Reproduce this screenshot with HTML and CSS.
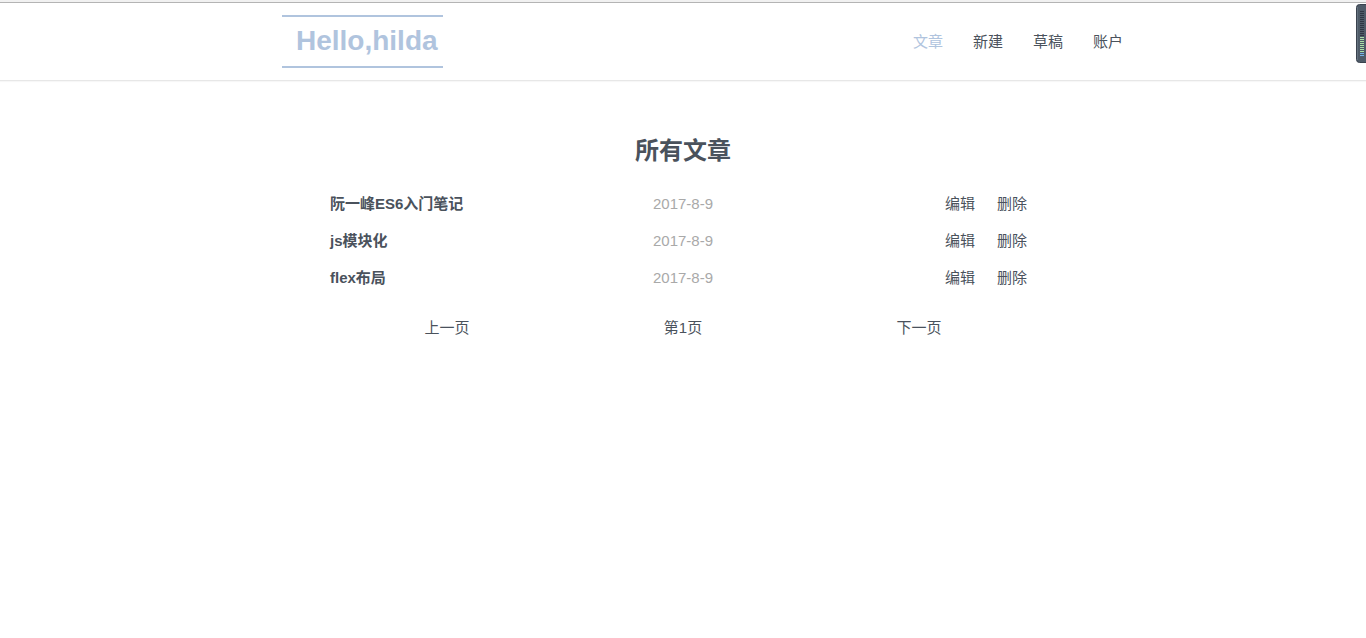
FILE: index.html
```html
<!DOCTYPE html>
<html lang="zh-CN">
<head>
<meta charset="utf-8">
<title>所有文章</title>
<link rel="stylesheet" href="styles.css">
</head>
<body>
<header class="site-header">
  <div class="header-inner">
    <a class="logo" href="#">Hello,hilda</a>
    <nav class="nav">
      <a class="nav-link active" href="#">文章</a>
      <a class="nav-link" href="#">新建</a>
      <a class="nav-link" href="#">草稿</a>
      <a class="nav-link" href="#">账户</a>
    </nav>
  </div>
</header>
<main class="content">
  <h1 class="title">所有文章</h1>
  <ul class="list">
    <li class="row">
      <a class="name" href="#">阮一峰ES6入门笔记</a>
      <span class="date">2017-8-9</span>
      <span class="actions"><a href="#">编辑</a><a href="#">删除</a></span>
    </li>
    <li class="row">
      <a class="name" href="#">js模块化</a>
      <span class="date">2017-8-9</span>
      <span class="actions"><a href="#">编辑</a><a href="#">删除</a></span>
    </li>
    <li class="row">
      <a class="name" href="#">flex布局</a>
      <span class="date">2017-8-9</span>
      <span class="actions"><a href="#">编辑</a><a href="#">删除</a></span>
    </li>
  </ul>
  <nav class="pager">
    <a href="#">上一页</a>
    <span>第1页</span>
    <a href="#">下一页</a>
  </nav>
</main>
<svg class="meter" width="10" height="59" viewBox="0 0 10 59" aria-hidden="true">
  <rect x="0.5" y="0.5" width="14" height="58" rx="3" fill="#4f5b68" stroke="#3a424e"/>
  <path d="M1.5 3V56" stroke="#64717e"/>
  <path d="M6 7V33" stroke="#2f3642" stroke-width="4" stroke-dasharray="1 1"/>
  <path d="M6 33V48" stroke="#a9dfa6" stroke-width="4" stroke-dasharray="1 1"/>
  <path d="M6 49V52" stroke="#76b2e6" stroke-width="4" stroke-dasharray="1 1"/>
</svg>
</body>
</html>
```
FILE: styles.css
```css
* {
  box-sizing: border-box;
}

body {
  margin: 0;
  background: #fff;
  color: #4a525c;
  font: 15px/21px "Liberation Sans", Arial, "Noto Sans CJK SC", sans-serif;
}

a {
  color: inherit;
  text-decoration: none;
}

.site-header {
  border-top: 2px solid #f1f1f1;
  border-bottom: 1px solid #e7e7e7;
  box-shadow: 0 1px 1px #f7f7f7;
}

.header-inner {
  display: flex;
  align-items: center;
  justify-content: space-between;
  padding: 12px calc(50% - 455px) 12px calc(50% - 401px);
  border-top: 1px solid #b4b4b4;
}

.logo {
  padding: 9px 5px 10px 14px;
  border-top: 2px solid #b0c4de;
  border-bottom: 2px solid #b0c4de;
  color: #b0c4de;
  font-size: 28px;
  font-weight: bold;
  line-height: 30px;
}

.nav {
  display: flex;
}

.nav-link {
  padding: 0 15px;
}

.nav-link.active {
  color: #b0c4de;
}

.content {
  max-width: 708px;
  margin: 0 auto;
  padding-top: 52px;
}

.title {
  margin: 0 0 16px;
  font-size: 24px;
  line-height: 36px;
  text-align: center;
}

.list {
  margin: 0;
  padding: 0;
  list-style: none;
}

.row,
.pager {
  display: grid;
  grid-template-columns: repeat(3, 1fr);
  padding: 8px 0;
  text-align: center;
}

.name {
  padding-left: 1px;
  font-weight: bold;
  text-align: left;
}

.date {
  color: #a9a9a9;
}

.actions {
  display: flex;
  justify-content: flex-end;
  gap: 22px;
  padding-right: 10px;
}

.pager {
  margin-top: 13px;
}

.meter {
  position: absolute;
  top: 4px;
  right: 0;
}
```
